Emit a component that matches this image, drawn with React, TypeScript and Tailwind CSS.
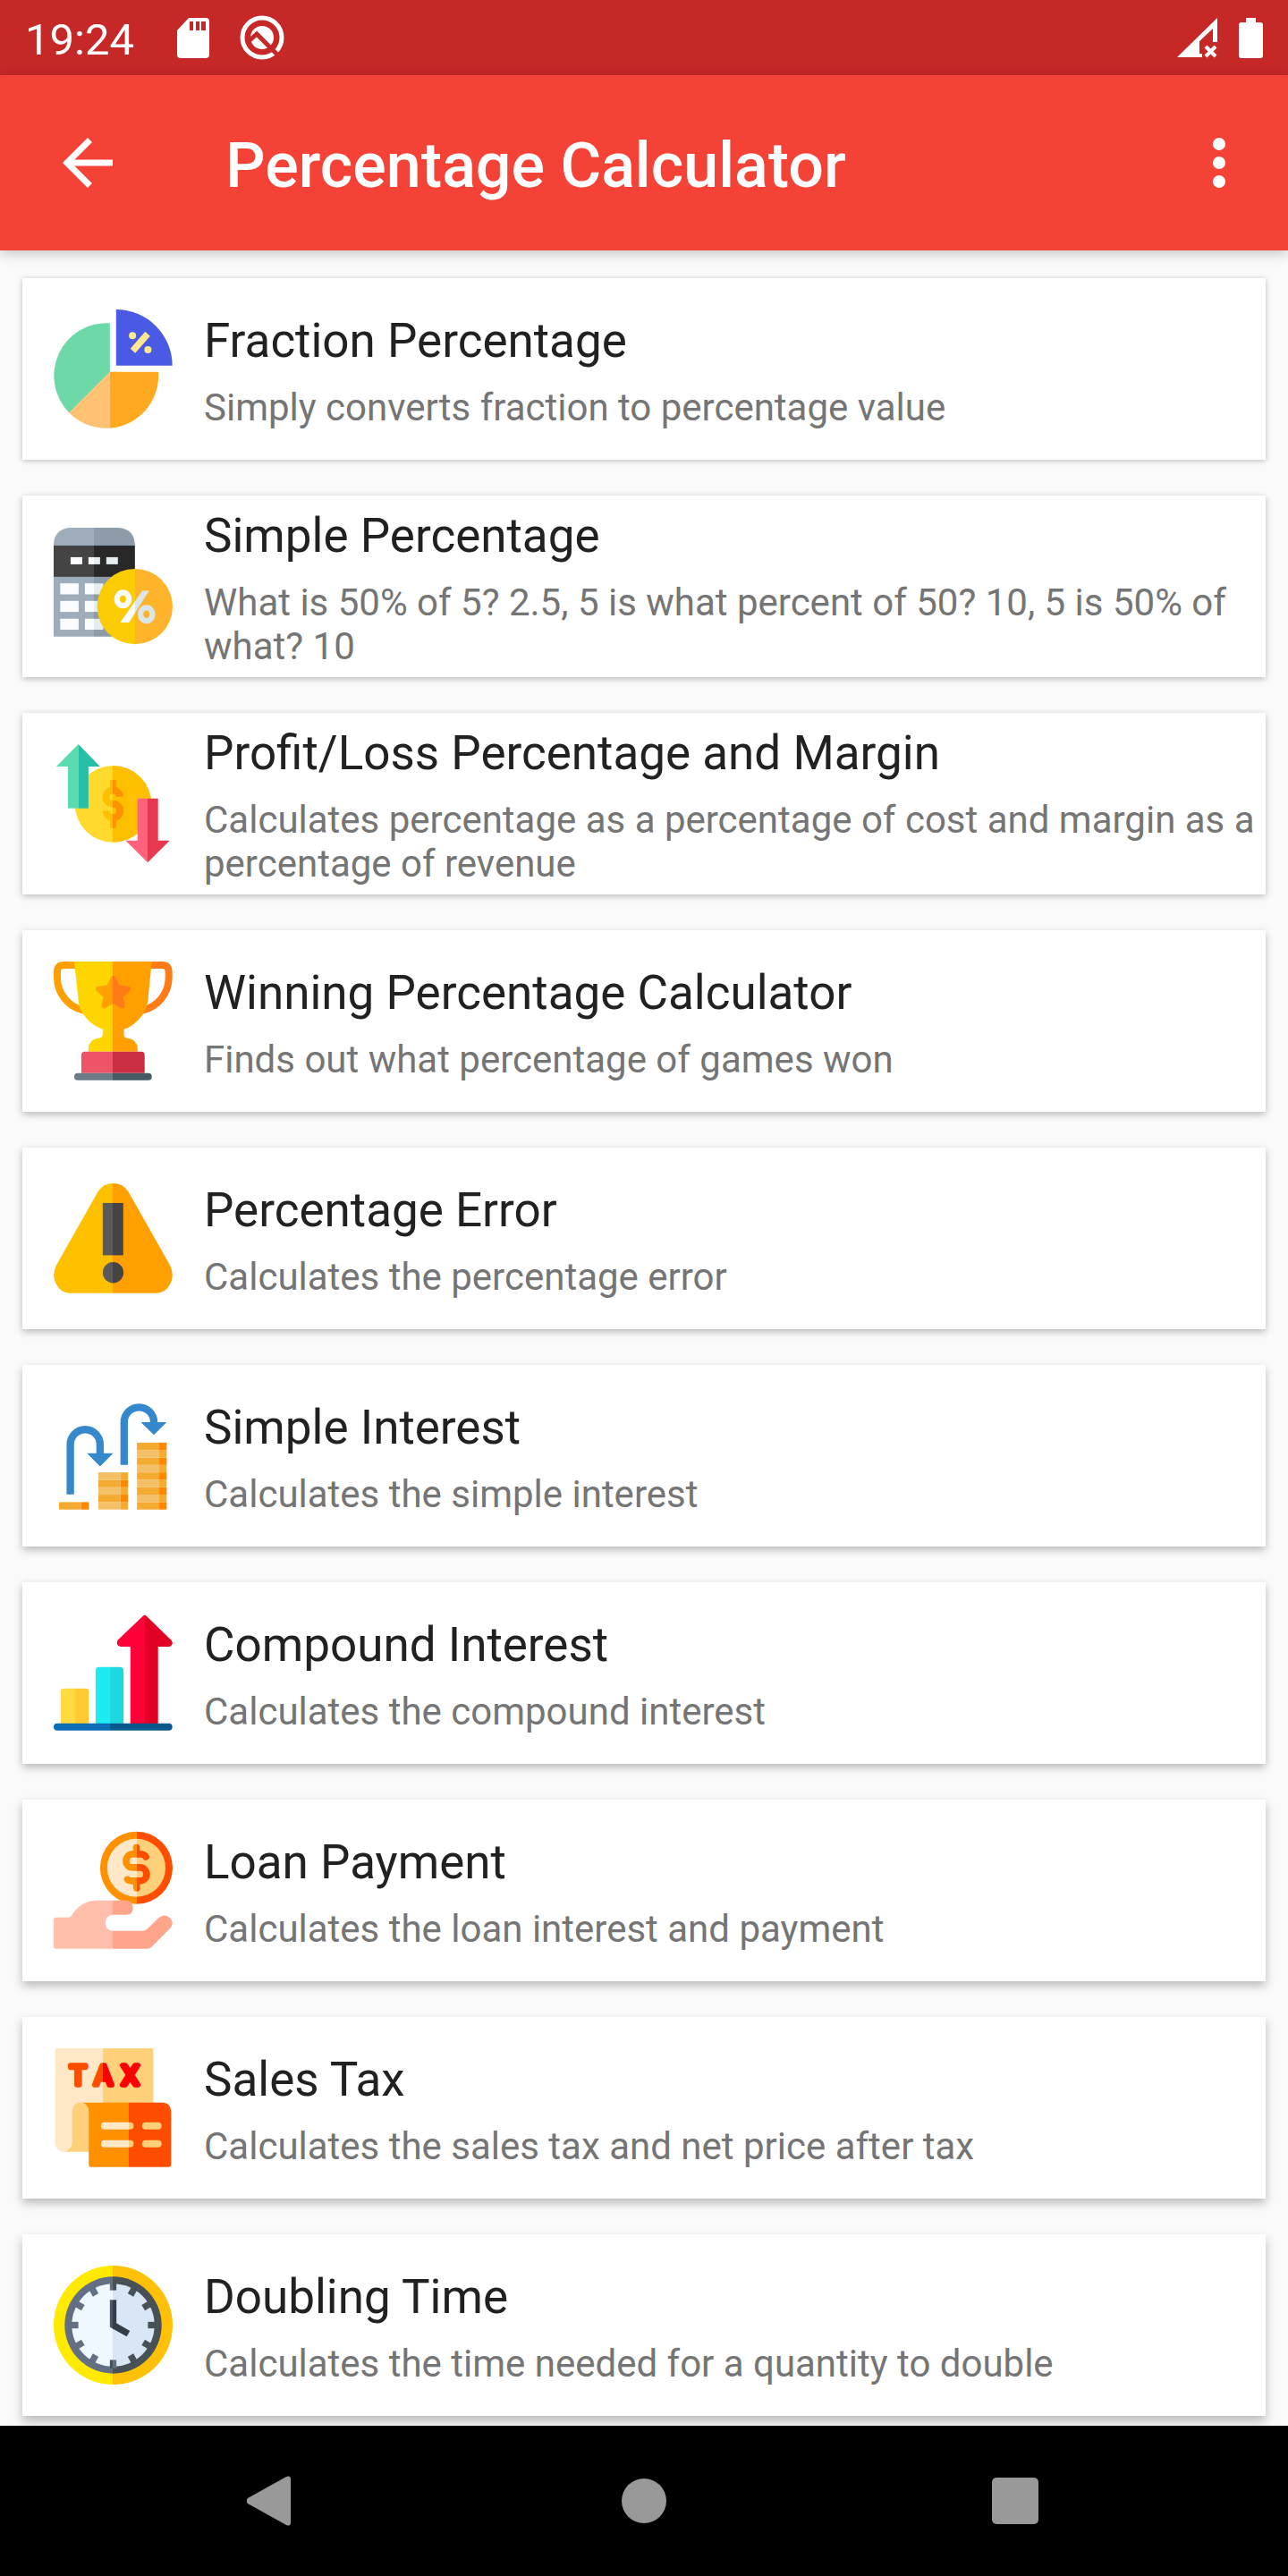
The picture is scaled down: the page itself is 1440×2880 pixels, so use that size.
import React from 'react';

type TCalculator = {
  title: string;
  description: string;
  icon: () => React.ReactElement;
};

type TSplitProps = {
  id: string;
  at: number;
  left: string;
  right: string;
};

// Two flat colours that meet at x = at
function Split({ id, at, left, right }: TSplitProps) {
  return (
    <linearGradient id={id} gradientUnits="userSpaceOnUse" x1="0" y1="0" x2="400" y2="0">
      <stop offset={at / 400} stopColor={left} />
      <stop offset={at / 400} stopColor={right} />
    </linearGradient>
  );
}

function IconFrame({ children }: { children: React.ReactNode }) {
  return (
    <svg viewBox="0 0 400 400" className="w-[133px] h-[133px] shrink-0" aria-hidden="true">
      {children}
    </svg>
  );
}

function FractionIcon() {
  return (
    <IconFrame>
      <path d="M189 46V210L52 347A177 177 0 0 1 189 46Z" fill="#6dd8a8" />
      <path d="M189 210L52 347A177 177 0 0 0 189 399Z" fill="#ffc273" />
      <path d="M189 210H352A177 177 0 0 1 189 399Z" fill="#ffa921" />
      <path d="M210 0A189 189 0 0 1 399 189H210Z" fill="#4b5ae4" />
      <circle cx="265" cy="88" r="12" fill="#ffe98f" />
      <circle cx="317" cy="135" r="12" fill="#ffe98f" />
      <path d="M266 139L316 82" stroke="#ffe98f" strokeWidth="22" />
    </IconFrame>
  );
}

function CalculatorIcon() {
  return (
    <IconFrame>
      <Split id="calc-body" at={136} left="#9facb9" right="#8e9ba8" />
      <Split id="calc-screen" at={136} left="#444444" right="#282828" />
      <Split id="calc-key" at={136} left="#fafcff" right="#e4edf2" />
      <Split id="calc-coin" at={273} left="#fbcc04" right="#ffb42c" />
      <Split id="calc-sign" at={273} left="#fafcff" right="#dbe6eb" />
      <path d="M0 369V58Q3 7 55 3H218Q270 7 273 58V369Z" fill="url(#calc-body)" />
      <rect y="63" width="273" height="105" fill="url(#calc-screen)" />
      {[57, 117, 177].map((x) => (
        <rect key={x} x={x} y="102" width="39" height="24" fill="url(#calc-key)" />
      ))}
      {[190, 249, 309].map((y) => (
        <g key={y} fill="url(#calc-key)">
          <rect x="22" y={y} width="62" height="37" />
          <rect x="105" y={y} width="62" height="37" />
        </g>
      ))}
      <circle cx="273" cy="268" r="127" fill="url(#calc-coin)" />
      <path d="M298 215H321L253 322H224Z" fill="url(#calc-sign)" />
      <ellipse cx="233" cy="243" rx="20" ry="22" fill="none" stroke="url(#calc-sign)" strokeWidth="19" />
      <ellipse cx="312" cy="294" rx="20" ry="22" fill="none" stroke="url(#calc-sign)" strokeWidth="19" />
    </IconFrame>
  );
}

function ProfitIcon() {
  return (
    <IconFrame>
      <Split id="profit-coin" at={199} left="#ffda2d" right="#fdbf00" />
      <Split id="profit-sign" at={199} left="#fdbf00" right="#ff9100" />
      <Split id="profit-up" at={84} left="#5adcb0" right="#27bfa6" />
      <Split id="profit-down" at={317} left="#ff637b" right="#e8384f" />
      <circle cx="200" cy="201" r="129" fill="url(#profit-coin)" />
      <path d="M189 120H210V150H189ZM189 250H210V282H189Z" fill="url(#profit-sign)" />
      <path
        d="M222 177A23 23 0 1 0 200 201A23 23 0 1 1 177 224"
        fill="none"
        stroke="url(#profit-sign)"
        strokeWidth="24"
      />
      <path d="M83 0L156 75H117V216H48V75H9Z" fill="url(#profit-up)" />
      <path d="M282 183H351V324H390L316 398L242 324H282Z" fill="url(#profit-down)" />
    </IconFrame>
  );
}

function TrophyIcon() {
  return (
    <IconFrame>
      <Split id="cup-body" at={200} left="#ffd500" right="#ffa000" />
      <Split id="cup-accent" at={200} left="#ffa000" right="#ff7b17" />
      <Split id="cup-base" at={200} left="#ed5468" right="#cb2f43" />
      <Split id="cup-foot" at={200} left="#6b7c87" right="#465a63" />
      <g fill="none" stroke="url(#cup-accent)" strokeWidth="24">
        <path d="M80 12H34Q12 12 12 36V55C12 105 48 152 100 164" />
        <path d="M319 12H365Q387 12 387 36V55C387 105 351 152 299 164" />
      </g>
      <path
        d="M69 0H330L316 138C308 178 275 215 236 228V244Q236 258 250 258Q280 262 282 292V303H117V292Q119 262 149 258Q165 258 165 244V228C125 212 90 178 84 138Z"
        fill="url(#cup-body)"
      />
      <path
        d="M200 56L215 87L250 92L224 117L231 149L200 132L169 149L176 117L150 92L185 87Z"
        fill="url(#cup-accent)"
        stroke="url(#cup-accent)"
        strokeWidth="17"
        strokeLinejoin="round"
      />
      <path d="M93 375V315Q93 303 105 303H294Q306 303 306 315V375Z" fill="url(#cup-base)" />
      <rect x="69" y="375" width="261" height="24" rx="12" fill="url(#cup-foot)" />
    </IconFrame>
  );
}

function WarningIcon() {
  return (
    <IconFrame>
      <Split id="warn-sign" at={200} left="#ffc000" right="#ffa000" />
      <Split id="warn-mark" at={200} left="#5a5a5a" right="#444444" />
      <path
        d="M149 43Q167 15 200 15Q233 15 251 43L391 290Q408 325 391 355Q376 384 345 384H55Q24 384 9 355Q-8 325 9 290Z"
        fill="url(#warn-sign)"
      />
      <rect x="165" y="81" width="69" height="176" fill="url(#warn-mark)" />
      <circle cx="200" cy="315" r="35" fill="url(#warn-mark)" />
    </IconFrame>
  );
}

function CoinStack({ x, rows }: { x: number; rows: number }) {
  return (
    <g>
      {Array.from({ length: rows }, (_, row) => {
        const y = 356 - row * 25;
        const dark = rows === 5 ? row % 2 === 1 : row % 2 === 0;

        return (
          <g key={row}>
            <rect x={x} y={y} width="75" height="25" fill={dark ? '#f5ab32' : '#f3c068'} />
            <rect x={x + 75} y={y} width="25" height="25" fill={dark ? '#ff8800' : '#f5ab32'} />
          </g>
        );
      })}
    </g>
  );
}

function SimpleInterestIcon() {
  return (
    <IconFrame>
      <CoinStack x={18} rows={1} />
      <CoinStack x={150} rows={5} />
      <CoinStack x={280} rows={9} />
      <g fill="none" stroke="#3588cb" strokeWidth="25">
        <path d="M56 330V162A50 50 0 0 1 156 162V196" />
        <path d="M237 231V87A50 50 0 0 1 337 87V92" />
      </g>
      <path d="M112 192H200L156 236ZM293 87H380L337 130Z" fill="#3588cb" />
    </IconFrame>
  );
}

function CompoundInterestIcon() {
  return (
    <IconFrame>
      <Split id="comp-small" at={72} left="#ffdb41" right="#ffcb33" />
      <Split id="comp-mid" at={189} left="#1eeaf2" right="#1ed8e0" />
      <Split id="comp-arrow" at={306} left="#ff0038" right="#e30025" />
      <Split id="comp-base" at={189} left="#0c6db6" right="#085a8d" />
      <rect x="24" y="252" width="94" height="130" rx="9" fill="url(#comp-small)" />
      <rect x="141" y="180" width="94" height="200" rx="12" fill="url(#comp-mid)" />
      <path
        d="M300 8Q306 3 312 8L396 90Q403 100 396 107Q393 111 388 111H351V375H258V111H225Q213 109 213 98Q213 92 216 89Z"
        fill="url(#comp-arrow)"
      />
      <rect y="369" width="399" height="24" rx="12" fill="url(#comp-base)" />
    </IconFrame>
  );
}

function LoanIcon() {
  return (
    <IconFrame>
      <Split id="loan-ring" at={279} left="#ff9100" right="#ff4d00" />
      <Split id="loan-coin" at={279} left="#ffe8c8" right="#ffd07a" />
      <Split id="loan-hand" at={200} left="#ffbfab" right="#ffa58c" />
      <circle cx="278" cy="124" r="122" fill="url(#loan-ring)" />
      <circle cx="278" cy="124" r="98" fill="url(#loan-coin)" />
      <path
        d="M310 87Q304 78 290 78H266A22 22 0 0 0 266 123H290A22 22 0 0 1 290 168H262Q250 168 248 163M278 56L279 78M278 168L279 192"
        fill="none"
        stroke="url(#loan-ring)"
        strokeWidth="23"
        strokeLinecap="round"
      />
      <path
        d="M0 299Q0 291 8 291H48Q56 291 60 285Q92 234 145 234H243Q267 236 267 258Q267 282 243 282H200Q174 284 174 309Q174 335 200 336H300Q308 336 314 330L352 293Q373 275 392 293Q407 310 392 327L329 390Q323 396 315 396H8Q0 396 0 389Z"
        fill="url(#loan-hand)"
      />
    </IconFrame>
  );
}

function TaxIcon() {
  return (
    <IconFrame>
      <Split id="tax-paper" at={165} left="#ffe8c8" right="#ffd07a" />
      <Split id="tax-letter" at={165} left="#ff4d00" right="#ff0000" />
      <Split id="tax-card" at={252} left="#ff9100" right="#ff4d00" />
      <Split id="tax-line" at={252} left="#ffe8c8" right="#ffd07a" />
      <path
        d="M5 7Q5 0 12 0H328Q335 0 335 7V200H90V320Q80 348 33 348Q7 345 5 319Z"
        fill="url(#tax-paper)"
      />
      <path d="M33 348Q60 345 62 316V211Q66 183 92 183L130 200V348Z" fill="#ffd07a" />
      <path
        d="M95 183H370Q393 187 395 211V392Q395 399 388 399H126Q118 399 118 392V211Q116 188 95 183Z"
        fill="url(#tax-card)"
      />
      <g
        fill="url(#tax-letter)"
        stroke="url(#tax-letter)"
        strokeWidth="17"
        strokeLinejoin="round"
        textAnchor="middle"
        fontSize="94"
        fontFamily="Roboto, sans-serif"
      >
        <text x="82" y="124">T</text>
        <text x="167" y="124">A</text>
        <text x="257" y="124">X</text>
      </g>
      {[261, 321].map((y) => (
        <g key={y} fill="url(#tax-line)">
          <rect x="159" y={y - 12} width="110" height="24" rx="12" />
          <rect x="297" y={y - 12} width="66" height="24" rx="12" />
        </g>
      ))}
    </IconFrame>
  );
}

function ClockIcon() {
  return (
    <IconFrame>
      <Split id="clock-case" at={200} left="#ffea00" right="#ffc107" />
      <Split id="clock-ring" at={200} left="#636f82" right="#475156" />
      <Split id="clock-face" at={200} left="#eff7ff" right="#d9e6f6" />
      <Split id="clock-hand" at={200} left="#4a5567" right="#343c46" />
      <circle cx="200" cy="200" r="200" fill="url(#clock-case)" />
      <circle cx="200" cy="200" r="163" fill="url(#clock-ring)" />
      <circle cx="200" cy="200" r="139" fill="url(#clock-face)" />
      {Array.from({ length: 12 }, (_, hour) => {
        const color = hour > 0 && hour < 6 ? '#475156' : '#636f82';

        return (
          <rect
            key={hour}
            x="189"
            y="55"
            width="22"
            height="28"
            fill={hour % 6 === 0 ? 'url(#clock-ring)' : color}
            transform={`rotate(${hour * 30} 200 200)`}
          />
        );
      })}
      <path d="M200 115V200L251 229" fill="none" stroke="url(#clock-hand)" strokeWidth="22" />
    </IconFrame>
  );
}

const CALCULATORS: TCalculator[] = [
  {
    title: 'Fraction Percentage',
    description: 'Simply converts fraction to percentage value',
    icon: FractionIcon,
  },
  {
    title: 'Simple Percentage',
    description: 'What is 50% of 5? 2.5, 5 is what percent of 50? 10, 5 is 50% of what? 10',
    icon: CalculatorIcon,
  },
  {
    title: 'Profit/Loss Percentage and Margin',
    description:
      'Calculates percentage as a percentage of cost and margin as a percentage of revenue',
    icon: ProfitIcon,
  },
  {
    title: 'Winning Percentage Calculator',
    description: 'Finds out what percentage of games won',
    icon: TrophyIcon,
  },
  {
    title: 'Percentage Error',
    description: 'Calculates the percentage error',
    icon: WarningIcon,
  },
  {
    title: 'Simple Interest',
    description: 'Calculates the simple interest',
    icon: SimpleInterestIcon,
  },
  {
    title: 'Compound Interest',
    description: 'Calculates the compound interest',
    icon: CompoundInterestIcon,
  },
  {
    title: 'Loan Payment',
    description: 'Calculates the loan interest and payment',
    icon: LoanIcon,
  },
  {
    title: 'Sales Tax',
    description: 'Calculates the sales tax and net price after tax',
    icon: TaxIcon,
  },
  {
    title: 'Doubling Time',
    description: 'Calculates the time needed for a quantity to double',
    icon: ClockIcon,
  },
];

function StatusBar() {
  return (
    <div className="bg-[#c62828] h-21 flex items-center justify-between px-7">
      <div className="flex items-center">
        <span className="text-[49px] leading-none pt-1">19:24</span>
        <svg viewBox="0 0 36 45" className="w-9 h-[45px] ml-12" fill="currentColor" aria-hidden="true">
          <path
            fillRule="evenodd"
            d="M13 0H32Q36 0 36 4V41Q36 45 32 45H4Q0 45 0 41V14ZM14 4V14H18V4ZM21 4V14H25V4ZM27 4V14H32V4Z"
          />
        </svg>
        <svg viewBox="0 0 50 50" className="w-[50px] h-[50px] ml-[34px]" aria-hidden="true">
          <circle cx="25" cy="25" r="22" fill="none" stroke="currentColor" strokeWidth="5" />
          <circle cx="25" cy="25" r="13" fill="currentColor" />
          <path d="M9 30L19 21L44 46" fill="none" stroke="#c62828" strokeWidth="5" />
        </svg>
      </div>
      <div className="flex items-center gap-6">
        <svg viewBox="0 0 45 45" className="w-[45px] h-[45px]" aria-hidden="true">
          <path
            fillRule="evenodd"
            fill="currentColor"
            d="M45 0V27H40V12L25 26V40H28V44H0Z"
          />
          <path d="M32 32L43 43M43 32L32 43" stroke="currentColor" strokeWidth="4" />
        </svg>
        <svg viewBox="0 0 27 45" className="w-[27px] h-[45px]" fill="currentColor" aria-hidden="true">
          <path d="M8 0H19V5H24Q27 5 27 8V42Q27 45 24 45H3Q0 45 0 42V8Q0 5 3 5H8Z" />
        </svg>
      </div>
    </div>
  );
}

function AppBar() {
  return (
    <header className="bg-[#f44336] h-49 flex items-center pl-14 pr-[35px] shadow-[0_4px_14px_rgba(0,0,0,0.2)]">
      <button type="button" aria-label="Back">
        <svg viewBox="0 0 24 24" className="w-21 h-21" fill="currentColor">
          <path d="M20 11H7.83l5.59-5.59L12 4l-8 8 8 8 1.41-1.41L7.83 13H20v-2z" />
        </svg>
      </button>
      <h1 className="flex-1 ml-28 pt-1.5 text-[70px] leading-none font-medium">
        Percentage Calculator
      </h1>
      <button type="button" aria-label="More options">
        <svg viewBox="0 0 24 24" className="w-21 h-21" fill="currentColor">
          <circle cx="12" cy="6" r="2" />
          <circle cx="12" cy="12" r="2" />
          <circle cx="12" cy="18" r="2" />
        </svg>
      </button>
    </header>
  );
}

function CalculatorCard({ calculator, index }: { calculator: TCalculator; index: number }) {
  const Icon = calculator.icon;
  // cards further down the list cast a longer shadow
  const offset = 1 + Math.round(index / 2);

  return (
    <li>
      <a
        href="#"
        className="bg-white min-h-[203px] flex items-center gap-[35px] pl-[35px] pr-2"
        style={{ boxShadow: `0 ${offset}px ${offset + 5}px rgba(0, 0, 0, 0.26)` }}
      >
        <Icon />
        <div className="pt-1">
          <h2 className="text-[53px] leading-[62px] text-[#212121]">{calculator.title}</h2>
          <p className="mt-[19px] text-[42px] leading-[49px] text-[#757575]">
            {calculator.description}
          </p>
        </div>
      </a>
    </li>
  );
}

function NavigationBar() {
  return (
    <nav className="relative bg-black h-42 flex items-center justify-center gap-90 text-[#999999]">
      <button type="button" aria-label="Back">
        <svg viewBox="0 0 56 56" className="w-14 h-14" fill="currentColor">
          <path d="M1 25L44 1Q49 -1 49 4V52Q49 57 44 55L1 31Q-2 28 1 25Z" />
        </svg>
      </button>
      <button type="button" aria-label="Home">
        <svg viewBox="0 0 56 56" className="w-14 h-14" fill="currentColor">
          <circle cx="28" cy="28" r="25" />
        </svg>
      </button>
      <button type="button" aria-label="Recent apps">
        <svg viewBox="0 0 56 56" className="w-14 h-14" fill="currentColor">
          <rect x="1" y="2" width="52" height="52" rx="5" />
        </svg>
      </button>
    </nav>
  );
}

function App() {
  return (
    <div className="min-h-screen flex flex-col bg-[#fafafa] text-white font-[Roboto,sans-serif]">
      <StatusBar />
      <AppBar />
      <main className="flex-1 px-[25px] pt-[31px] pb-[11px]">
        <ul className="flex flex-col gap-10">
          {CALCULATORS.map((calculator, index) => (
            <CalculatorCard key={calculator.title} calculator={calculator} index={index} />
          ))}
        </ul>
      </main>
      <NavigationBar />
    </div>
  );
}

export default App;
